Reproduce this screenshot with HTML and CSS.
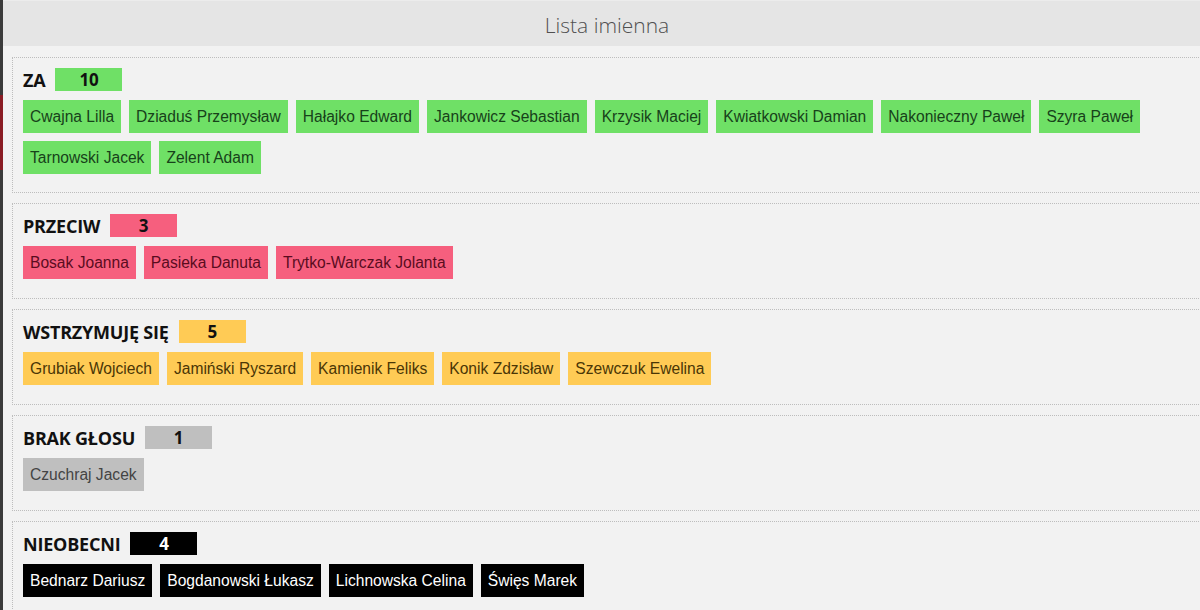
FILE: index.html
```html
<!DOCTYPE html>
<html lang="pl">
<head>
  <meta charset="UTF-8">
  <title>Lista imienna</title>
  <link rel="stylesheet" href="styles.css">
</head>
<body>
  <div class="modal">
    <div class="modal-header">Lista imienna</div>
    <div class="modal-body">

      <div class="group za">
        <div class="group-title">ZA <span class="count">10</span></div>
        <div class="names">
          <span class="name">Cwajna Lilla</span>
          <span class="name">Dziaduś Przemysław</span>
          <span class="name">Hałajko Edward</span>
          <span class="name">Jankowicz Sebastian</span>
          <span class="name">Krzysik Maciej</span>
          <span class="name">Kwiatkowski Damian</span>
          <span class="name">Nakonieczny Paweł</span>
          <span class="name">Szyra Paweł</span>
          <span class="name">Tarnowski Jacek</span>
          <span class="name">Zelent Adam</span>
        </div>
      </div>

      <div class="group przeciw">
        <div class="group-title">PRZECIW <span class="count">3</span></div>
        <div class="names">
          <span class="name">Bosak Joanna</span>
          <span class="name">Pasieka Danuta</span>
          <span class="name">Trytko-Warczak Jolanta</span>
        </div>
      </div>

      <div class="group wstrzymuje">
        <div class="group-title">WSTRZYMUJĘ SIĘ <span class="count">5</span></div>
        <div class="names">
          <span class="name">Grubiak Wojciech</span>
          <span class="name">Jamiński Ryszard</span>
          <span class="name">Kamienik Feliks</span>
          <span class="name">Konik Zdzisław</span>
          <span class="name">Szewczuk Ewelina</span>
        </div>
      </div>

      <div class="group brak">
        <div class="group-title">BRAK GŁOSU <span class="count">1</span></div>
        <div class="names">
          <span class="name">Czuchraj Jacek</span>
        </div>
      </div>

      <div class="group nieobecni">
        <div class="group-title">NIEOBECNI <span class="count">4</span></div>
        <div class="names">
          <span class="name">Bednarz Dariusz</span>
          <span class="name">Bogdanowski Łukasz</span>
          <span class="name">Lichnowska Celina</span>
          <span class="name">Święs Marek</span>
        </div>
      </div>

    </div>
  </div>
</body>
</html>
```

FILE: styles.css
```css
html, body {
  margin: 0;
  height: 100%;
}
body {
  overflow: hidden;
  background: linear-gradient(to bottom, #3b3b3b 0, #3b3b3b 95px, #8a1c24 95px, #8a1c24 170px, #3b3b3b 170px);
  font-family: "Liberation Sans", Arial, sans-serif;
}
.modal {
  margin-left: 3px;
  width: 1208px;
  height: 100%;
  background-color: #f2f2f2;
}
.modal-header {
  height: 46px;
  line-height: 48px;
  background-color: #e5e5e5;
  border-top: 1px solid #ececec;
  box-sizing: border-box;
  text-align: center;
  font-family: "Open Sans", sans-serif;
  font-weight: 300;
  font-size: 21px;
  color: #505050;
}
.modal-body {
  padding: 11px 0 0 9px;
}
.group {
  border: 1px dotted #bdbdbd;
  padding: 10px 10px 18px 10px;
  margin-bottom: 10px;
}
.group + .group {
  padding-bottom: 19px;
}
.group-title {
  display: flex;
  align-items: center;
  height: 23px;
  font-family: "Open Sans", sans-serif;
  font-weight: 700;
  font-size: 18px;
  letter-spacing: -0.2px;
  color: #111;
}
.count {
  display: inline-block;
  width: 67px;
  height: 23px;
  line-height: 23px;
  margin-left: 10px;
  font-size: 17px;
  text-align: center;
}
.names {
  display: flex;
  flex-wrap: wrap;
  gap: 8px;
  margin-top: 9px;
}
.name {
  display: inline-block;
  height: 33px;
  line-height: 33px;
  padding: 0 7px;
  font-size: 15.6px;
}

.za .count, .za .name { background-color: #6fe066; }
.za .name { color: #17421a; }
.przeciw .count, .przeciw .name { background-color: #f65f7e; }
.przeciw .name { color: #5a0c1e; }
.wstrzymuje .count, .wstrzymuje .name { background-color: #ffcb55; }
.wstrzymuje .name { color: #4a3606; }
.brak .count, .brak .name { background-color: #bfbfbf; }
.brak .name { color: #444; }
.nieobecni .count, .nieobecni .name { background-color: #000; color: #fff; }
```
